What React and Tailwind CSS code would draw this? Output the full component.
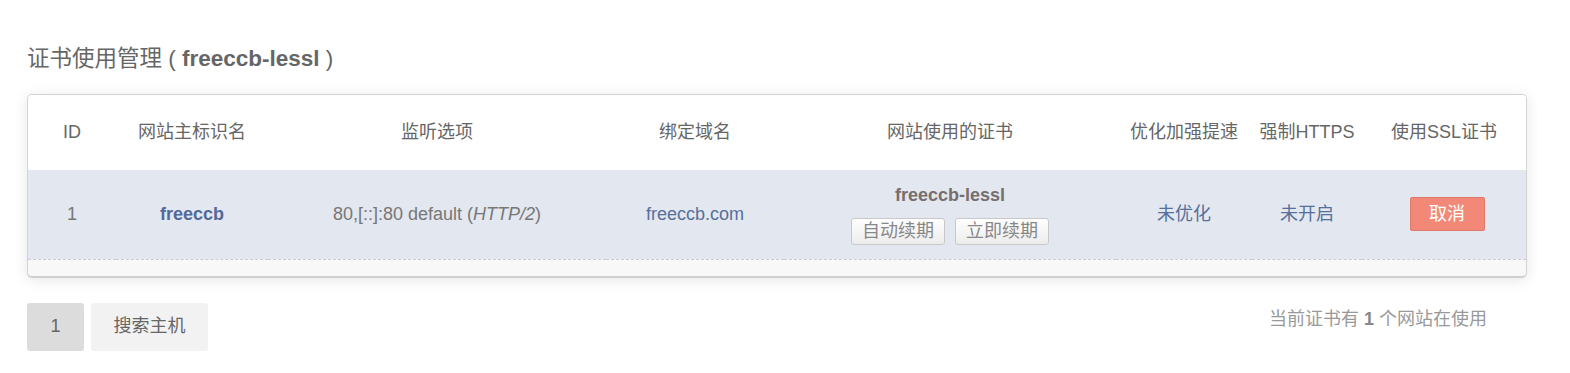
import React from 'react';

const FONT = { fontFamily: '"Liberation Sans", "Noto Sans CJK SC", sans-serif' };

const COLS = [88, 152, 338, 178, 332, 136, 110, 164];

const HEADERS = ['ID', '网站主标识名', '监听选项', '绑定域名', '网站使用的证书', '优化加强提速', '强制HTTPS', '使用SSL证书'];

function SmallButton({ children }) {
  return (
    <button className="h-[27px] px-[10px] text-[18px] leading-[25px] text-[#888] border border-[#c8c8c8] rounded-[3px] bg-gradient-to-b from-white to-[#ececec]">
      {children}
    </button>
  );
}

export default function App() {
  return (
    <div className="min-h-screen bg-white px-[27px] pt-[44px] text-[#666]" style={FONT}>
      {/* title */}
      <h2 className="h-[30px] leading-[30px] text-[22.5px] text-[#666]">
        证书使用管理 ( <span className="font-bold">freeccb-lessl</span> )
      </h2>

      {/* card */}
      <div className="mt-[20px] w-[1500px] bg-[#f8f8f8] border border-[#d4d4d4] border-b-2 border-b-[#cfcfcf] rounded-[5px] overflow-hidden shadow-[0_2px_14px_rgba(0,0,0,0.10)]">
        <table className="table-fixed w-full border-collapse text-[18px]">
          <colgroup>
            {COLS.map((w, i) => (
              <col key={i} style={{ width: w }} />
            ))}
          </colgroup>
          <thead>
            <tr className="h-[75px] bg-white">
              {HEADERS.map((h) => (
                <th key={h} className="font-normal text-[#666] text-center">{h}</th>
              ))}
            </tr>
          </thead>
          <tbody>
            <tr className="h-[89px] bg-[#e3e7ef] border-b border-dashed border-[#c9ccd4] text-center">
              <td className="text-[#777]">1</td>
              <td className="font-bold text-[#52699a]">freeccb</td>
              <td className="text-[#777]">
                80,[::]:80 default (<i>HTTP/2</i>)
              </td>
              <td className="text-[#56709c]">freeccb.com</td>
              <td>
                <div className="flex flex-col items-center">
                  <div className="font-bold text-[#776e6e] leading-[22px]">freeccb-lessl</div>
                  <div className="mt-[12px] flex gap-[10px]">
                    <SmallButton>自动续期</SmallButton>
                    <SmallButton>立即续期</SmallButton>
                  </div>
                </div>
              </td>
              <td className="text-[#56709c]">未优化</td>
              <td className="text-[#56709c]">未开启</td>
              <td>
                <button className="ml-[6px] w-[75px] h-[34px] bg-[#f28878] border border-[#df7868] rounded-[2px] text-white text-[18px]">
                  取消
                </button>
              </td>
            </tr>
          </tbody>
        </table>
        <div className="h-[16px]" />
      </div>

      {/* footer */}
      <div className="mt-[25px] w-[1500px] flex items-start justify-between">
        <div className="flex gap-[7px]">
          <div className="w-[57px] h-[48px] flex items-center justify-center bg-[#dcdcdc] rounded-[3px] text-[18px] text-[#666]">1</div>
          <div className="w-[117px] h-[48px] flex items-center justify-center bg-[#f2f2f2] rounded-[3px] text-[18px] text-[#666]">搜索主机</div>
        </div>
        <div className="mt-[3px] pr-[40px] text-[18px] text-[#999]">
          当前证书有 <span className="font-bold text-[#888]">1</span> 个网站在使用
        </div>
      </div>
    </div>
  );
}
